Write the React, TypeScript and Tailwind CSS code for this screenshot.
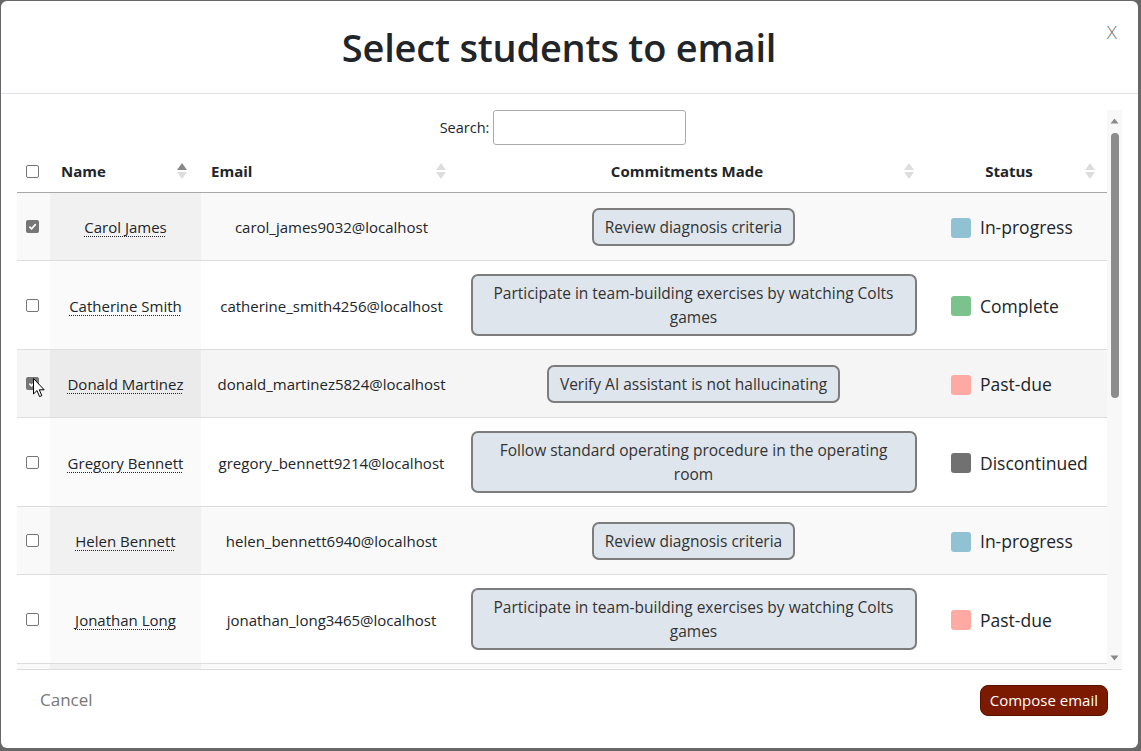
import React from 'react'

type Status = 'In-progress' | 'Complete' | 'Past-due' | 'Discontinued'

type Row = {
  name: string
  email: string
  commitment: string
  status: Status
  checked: boolean
  tall: boolean
}

const rows: Row[] = [
  { name: 'Carol James', email: 'carol_james9032@localhost', commitment: 'Review diagnosis criteria', status: 'In-progress', checked: true, tall: false },
  { name: 'Catherine Smith', email: 'catherine_smith4256@localhost', commitment: 'Participate in team-building exercises by watching Colts games', status: 'Complete', checked: false, tall: true },
  { name: 'Donald Martinez', email: 'donald_martinez5824@localhost', commitment: 'Verify AI assistant is not hallucinating', status: 'Past-due', checked: true, tall: false },
  { name: 'Gregory Bennett', email: 'gregory_bennett9214@localhost', commitment: 'Follow standard operating procedure in the operating room', status: 'Discontinued', checked: false, tall: true },
  { name: 'Helen Bennett', email: 'helen_bennett6940@localhost', commitment: 'Review diagnosis criteria', status: 'In-progress', checked: false, tall: false },
  { name: 'Jonathan Long', email: 'jonathan_long3465@localhost', commitment: 'Participate in team-building exercises by watching Colts games', status: 'Past-due', checked: false, tall: true },
  { name: 'Kevin Morris', email: 'kevin_morris1187@localhost', commitment: 'Review diagnosis criteria', status: 'Complete', checked: false, tall: false },
]

const swatch: Record<Status, string> = {
  'In-progress': 'bg-[#90c2d3]',
  Complete: 'bg-[#7cc28c]',
  'Past-due': 'bg-[#fea9a2]',
  Discontinued: 'bg-[#717171]',
}

const cols = 'grid grid-cols-[33px_151px_261px_463px_182px]'

function Box({ checked }: { checked: boolean }) {
  return checked ? (
    <span className="flex h-[13px] w-[13px] items-center justify-center rounded-[2px] bg-[#767676]">
      <svg width="9" height="9" viewBox="0 0 10 10">
        <path d="M1.5 5.2 L4 7.6 L8.6 2.4" fill="none" stroke="#fff" strokeWidth="1.8" />
      </svg>
    </span>
  ) : (
    <span className="h-[13px] w-[13px] rounded-[2px] border border-[#767676] bg-white" />
  )
}

function SortIcon({ active }: { active?: boolean }) {
  return (
    <svg width="10" height="16" viewBox="0 0 10 16" className="shrink-0">
      <path d="M5 0 L10 7 L0 7 Z" fill={active ? '#888' : '#ddd'} />
      <path d="M5 16 L10 9 L0 9 Z" fill="#ddd" />
    </svg>
  )
}

function Cursor() {
  return (
    <svg width="13" height="20" viewBox="0 0 13 20" className="pointer-events-none absolute left-[16px] top-[28px]">
      <path d="M0.5 0.5 L0.5 16 L4 12.6 L6.6 18.6 L8.8 17.6 L6.3 11.8 L11.2 11.8 Z" fill="#fff" stroke="#000" strokeWidth="1" strokeLinejoin="round" />
    </svg>
  )
}

export default function App() {
  return (
    <div
      className="h-[751px] w-[1141px] overflow-hidden bg-[#676767] pl-px pt-px"
      style={{ fontFamily: '"Segoe UI", "Open Sans", "Noto Sans", sans-serif' }}
    >
      <div className="relative flex h-[747px] w-[1137px] flex-col overflow-hidden rounded-md bg-white text-[#212529]">
        {/* header */}
        <div className="flex h-[93px] shrink-0 items-center justify-center border-b border-[#dee2e6] pr-[21px]">
          <h1 className="text-[38px] font-semibold leading-none tracking-[-0.2px]">Select students to email</h1>
          <button className="absolute right-[21px] top-[17px] text-[19px] font-light text-[#777]">X</button>
        </div>

        {/* body */}
        <div className="flex min-h-0 flex-1 flex-col pt-4">
          <div className="ml-4 mr-4 flex min-h-0 flex-1 border-b border-[#ddd]">
            <div className="w-[1090px] overflow-hidden">
              <div className="flex items-center justify-center gap-[4px] pl-[2px] text-[14.5px]">
                <label>Search:</label>
                <input className="h-[35px] w-[193px] rounded-[3px] border border-[#aaa] outline-none" />
              </div>

              <div className={`${cols} mt-[5px] h-[43px] items-center border-b border-[#a8a8a8] text-[15px] font-bold`}>
                <div className="flex justify-center pr-[3px]">
                  <Box checked={false} />
                </div>
                <div className="flex items-center justify-between pl-[11px] pr-[14px]">
                  <span>Name</span>
                  <SortIcon active />
                </div>
                <div className="flex items-center justify-between pl-[10px] pr-[16px]">
                  <span>Email</span>
                  <SortIcon />
                </div>
                <div className="flex items-center pl-[8px] pr-[11px]">
                  <span className="flex-1 text-center">Commitments Made</span>
                  <SortIcon />
                </div>
                <div className="flex items-center pl-[8px] pr-[12px]">
                  <span className="flex-1 text-center">Status</span>
                  <SortIcon />
                </div>
              </div>

              {rows.map((r, i) => {
                const odd = i % 2 === 0
                const hovered = i === 2
                const rowBg = hovered ? 'bg-[#f5f5f5]' : odd ? 'bg-[#f9f9f9]' : 'bg-white'
                const nameBg = hovered ? 'bg-[#ebebeb]' : odd ? 'bg-[#f1f1f1]' : 'bg-[#fafafa]'
                return (
                  <div
                    key={r.name}
                    className={`${cols} ${rowBg} ${r.tall ? 'h-[89px]' : 'h-[68px]'} border-b border-[#ddd] text-[15px]`}
                  >
                    <div className="relative flex items-center justify-center pr-[3px]">
                      <Box checked={r.checked} />
                      {hovered && <Cursor />}
                    </div>
                    <div className={`${nameBg} flex items-center justify-center pt-[2px]`}>
                      <abbr className="underline decoration-dotted decoration-1 underline-offset-[3px]" title={r.email}>
                        {r.name}
                      </abbr>
                    </div>
                    <div className="flex items-center justify-center pt-[2px]">{r.email}</div>
                    <div className="flex items-center justify-center px-[8px]">
                      <span className="max-w-[446px] rounded-[7px] border-2 border-[#7d7d7d] bg-[#dee5ec] px-[11px] py-[5px] text-center text-[15.5px] leading-[24px] text-[#333]">
                        {r.commitment}
                      </span>
                    </div>
                    <div className="flex items-center pl-[26px] pt-[2px] text-[17.5px]">
                      <span className={`mr-[9px] h-[20px] w-[20px] rounded-[3px] ${swatch[r.status]}`} />
                      {r.status}
                    </div>
                  </div>
                )
              })}
            </div>

            {/* scrollbar */}
            <div className="flex w-[15px] flex-col items-center bg-[#f8f8f8] py-[8px]">
              <svg width="9" height="6" viewBox="0 0 9 6">
                <path d="M4.5 0.5 L8.5 5.5 L0.5 5.5 Z" fill="#8a8a8a" />
              </svg>
              <div className="w-full flex-1 px-[3.5px] pt-[9px]">
                <div className="h-[265px] w-full rounded-full bg-[#8c8c8c]" />
              </div>
              <svg width="9" height="6" viewBox="0 0 9 6">
                <path d="M4.5 5.5 L8.5 0.5 L0.5 0.5 Z" fill="#8a8a8a" />
              </svg>
            </div>
          </div>

          {/* footer */}
          <div className="flex h-[78px] shrink-0 items-center justify-between pb-[18px] pl-[39px] pr-[30px]">
            <button className="text-[17px] text-[#777]">Cancel</button>
            <button className="h-[31px] rounded-[8px] border border-[#5a1200] bg-[#7b1a00] px-[9px] text-[15px] text-white">
              Compose email
            </button>
          </div>
        </div>
      </div>
    </div>
  )
}
